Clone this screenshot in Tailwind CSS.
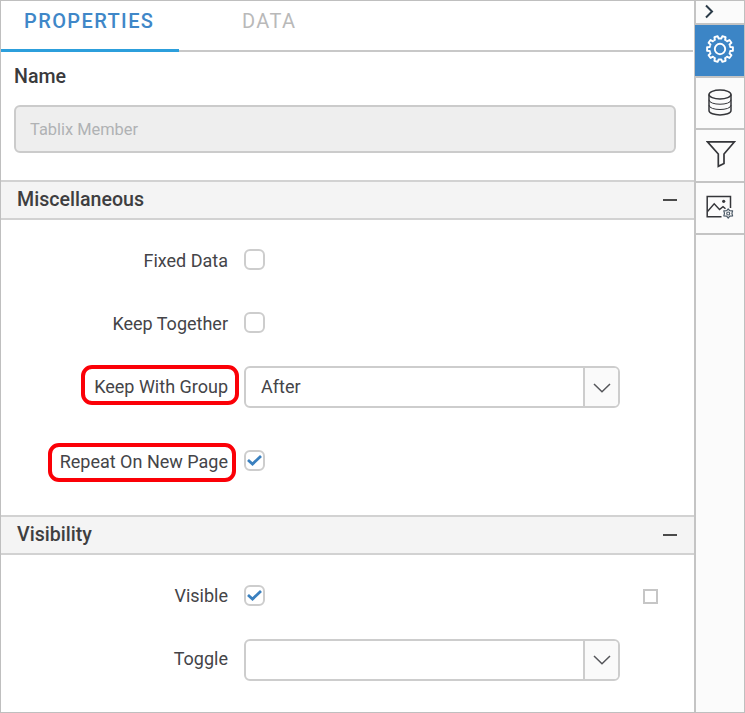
<!DOCTYPE html>
<html lang="en">
<head>
<meta charset="utf-8">
<title>Properties</title>
<script src="https://cdn.jsdelivr.net/npm/@tailwindcss/browser@4"></script>
</head>
<body class="bg-white">
<div class="flex h-[713px] w-[745px] overflow-hidden border border-[#bfbfbf] bg-white font-['Roboto',sans-serif] text-[18px] leading-[24px] text-[#444448]">
  <main class="flex w-[693px] shrink-0 flex-col">
    <nav class="flex h-[51px] shrink-0 text-[20px] font-medium tracking-[1.4px]">
      <div class="w-[178px] border-b-3 border-[#2c9fdc] pt-[8px] pl-[23px] text-[#3f87c8]">PROPERTIES</div>
      <div class="mr-px flex-1 border-b-2 border-[#c8c8c8] pt-[8px] pl-[63px] font-normal text-[#b9b9b9]">DATA</div>
    </nav>
    <section class="h-[128px] shrink-0 px-[13px] pt-[13px]">
      <label class="block text-[19.6px] font-medium text-[#3a3a3c]">Name</label>
      <div class="mt-[16px] flex h-[48px] w-[662px] items-center rounded-[6px] border-2 border-[#cbcbcb] bg-[#eeeeee] pt-px pl-[14px] text-[16.4px] text-[#b0b2b4]">Tablix Member</div>
    </section>

    <header class="flex h-[40px] shrink-0 items-center justify-between border-y-2 border-[#d2d2d2] bg-[#f4f4f4] pr-[17px] pl-[16px] text-[19.6px] font-medium text-[#3e3e40]">
      <h2>Miscellaneous</h2>
      <div class="h-[2px] w-[14px] bg-[#4a4a4a]"></div>
    </header>
    <section class="h-[295px] shrink-0 pt-[29px]">
      <div class="flex h-[21px] items-center">
        <div class="mt-[2px] w-[227px] text-right">Fixed Data</div>
        <div class="ml-[16px] size-[21px] rounded-[6px] border-2 border-[#cdcdcd]"></div>
      </div>
      <div class="mt-[42px] flex h-[21px] items-center">
        <div class="mt-[2px] w-[227px] text-right">Keep Together</div>
        <div class="ml-[16px] size-[21px] rounded-[6px] border-2 border-[#cdcdcd]"></div>
      </div>
      <div class="mt-[33px] flex h-[42px] items-center">
        <div class="relative w-[227px] text-right">Keep With Group
          <div class="absolute -top-[10px] left-[80px] h-[40px] w-[158px] rounded-[11px] border-4 border-[#fb0007]"></div>
        </div>
        <div class="ml-[16px] flex h-[42px] w-[376px] overflow-hidden rounded-[6px] border-2 border-[#cdcdcd]">
          <div class="flex flex-1 items-center pb-px pl-[15px]">After</div>
          <div class="flex w-[35px] items-center justify-center border-l-2 border-[#cdcdcd] bg-[#fafafa]">
            <svg class="mt-[2px] ml-px" width="18" height="10" viewBox="0 0 18 10" fill="none" stroke="#55565a" stroke-width="1.5"><path d="M1 1l8 7.800 8-7.800"/></svg>
          </div>
        </div>
      </div>
      <div class="mt-[42px] flex h-[21px] items-center">
        <div class="relative mt-[2px] w-[227px] text-right">Repeat On New Page
          <div class="absolute -top-[7px] left-[47px] h-[39px] w-[188px] rounded-[11px] border-4 border-[#fb0007]"></div>
        </div>
        <div class="ml-[16px] flex size-[21px] items-center justify-center rounded-[6px] border-2 border-[#cdcdcd]">
          <svg class="shrink-0" width="15" height="13" viewBox="0 0 15 13" fill="none" stroke="#3a80bf" stroke-width="2.800"><path d="M1 6l4.500 4L14 2"/></svg>
        </div>
      </div>
    </section>

    <header class="flex h-[40px] shrink-0 items-center justify-between border-y-2 border-[#d2d2d2] bg-[#f4f4f4] pr-[17px] pl-[16px] text-[19.6px] font-medium text-[#3e3e40]">
      <h2>Visibility</h2>
      <div class="h-[2px] w-[14px] bg-[#4a4a4a]"></div>
    </header>
    <section class="pt-[30px]">
      <div class="flex h-[21px] items-center">
        <div class="w-[227px] text-right">Visible</div>
        <div class="ml-[16px] flex size-[21px] items-center justify-center rounded-[6px] border-2 border-[#cdcdcd]">
          <svg class="shrink-0" width="15" height="13" viewBox="0 0 15 13" fill="none" stroke="#3a80bf" stroke-width="2.800"><path d="M1 6l4.500 4L14 2"/></svg>
        </div>
        <div class="mt-[2px] mr-[36px] ml-auto size-[15px] border-2 border-[#c6c6c6]"></div>
      </div>
      <div class="mt-[33px] flex h-[42px] items-center">
        <div class="w-[227px] pb-[2px] text-right">Toggle</div>
        <div class="ml-[16px] flex h-[42px] w-[376px] overflow-hidden rounded-[6px] border-2 border-[#cdcdcd]">
          <div class="flex-1"></div>
          <div class="flex w-[35px] items-center justify-center border-l-2 border-[#cdcdcd] bg-[#fafafa]">
            <svg class="ml-px" width="18" height="10" viewBox="0 0 18 10" fill="none" stroke="#55565a" stroke-width="1.500"><path d="M1 1l8 7.800 8-7.800"/></svg>
          </div>
        </div>
      </div>
    </section>
  </main>

  <aside class="flex w-[50px] shrink-0 flex-col border-l-2 border-[#c4c4c4] bg-[#fbfbfb]">
    <div class="h-[24px] shrink-0 border-b-2 border-[#c4c4c4] pt-[3px] pl-[9px]">
      <svg width="9" height="15" viewBox="0 0 9 15" fill="none" stroke="#2b3b48" stroke-width="2"><path d="M1 1.500l6 6-6 6"/></svg>
    </div>
    <div class="-ml-px flex h-[53px] shrink-0 items-center justify-center border-b-2 border-[#c4c4c4] bg-[#3c85c6]">
      <svg class="-mt-[3px]" width="30" height="30" viewBox="-15 -15 30 30" fill="none" stroke="#fff" stroke-width="1.900" stroke-linejoin="round">
        <defs><path id="tooth" d="M-3.240-9.990Q-2.600-10.200-2-10.300L-1.700-12.900H1.700L2-10.300Q2.600-10.200 3.240-9.990"/></defs>
        <use href="#tooth" transform="rotate(18)"/><use href="#tooth" transform="rotate(54)"/><use href="#tooth" transform="rotate(90)"/><use href="#tooth" transform="rotate(126)"/><use href="#tooth" transform="rotate(162)"/>
        <use href="#tooth" transform="rotate(198)"/><use href="#tooth" transform="rotate(234)"/><use href="#tooth" transform="rotate(270)"/><use href="#tooth" transform="rotate(306)"/><use href="#tooth" transform="rotate(342)"/>
        <circle r="5.200"/>
      </svg>
    </div>
    <div class="flex h-[52px] shrink-0 items-center justify-center border-b-2 border-[#c4c4c4]">
      <svg class="-mt-[2px]" width="24" height="27" viewBox="0 0 24 27" fill="none" stroke="#35363a" stroke-width="1.500">
        <ellipse cx="12" cy="5.500" rx="11" ry="4.400"/><path d="M1 5.500V21.500C1 27.400 23 27.400 23 21.500V5.500"/>
        <path stroke-width="1" d="M1 10.800C1 16.700 23 16.700 23 10.800M1 16.100C1 22 23 22 23 16.100"/>
      </svg>
    </div>
    <div class="flex h-[53px] shrink-0 items-center justify-center border-b-2 border-[#c4c4c4]">
      <svg class="-mt-[4px] ml-[2px]" width="30" height="28" viewBox="0 0 30 28" fill="none" stroke="#35363a" stroke-width="1.700">
        <path d="M1.500 1.800H28.500L18 14V23.500L12.300 26.300V14Z"/>
      </svg>
    </div>
    <div class="flex h-[52px] shrink-0 items-center justify-center border-b-2 border-[#c4c4c4]">
      <svg class="-mt-[2px]" width="28" height="25" viewBox="0 0 28 25" fill="none" stroke="#35363a" stroke-width="1.500">
        <path d="M15.500 21.700H1.200V1.500H24.500V13"/><path stroke-width="1.400" d="M1.500 16.500L8.200 8.700 13.500 14.500 17 11.600 19.500 13.800"/>
        <circle cx="17.700" cy="6.300" r="1.600" fill="#35363a" stroke="none"/>
        <path stroke="#4b5966" stroke-width="1.200" stroke-linejoin="round" d="M22.200 14l1.500 1.700 2.900.200-.700 2.400.700 2.500-2.900.300-1.500 2-1.500-2-2.900-.300.700-2.500-.700-2.400 2.900-.200z"/>
        <circle cx="22.200" cy="18.500" r="1.500" stroke="#4b5966" stroke-width="1.100"/>
      </svg>
    </div>
  </aside>
</div>
</body>
</html>
